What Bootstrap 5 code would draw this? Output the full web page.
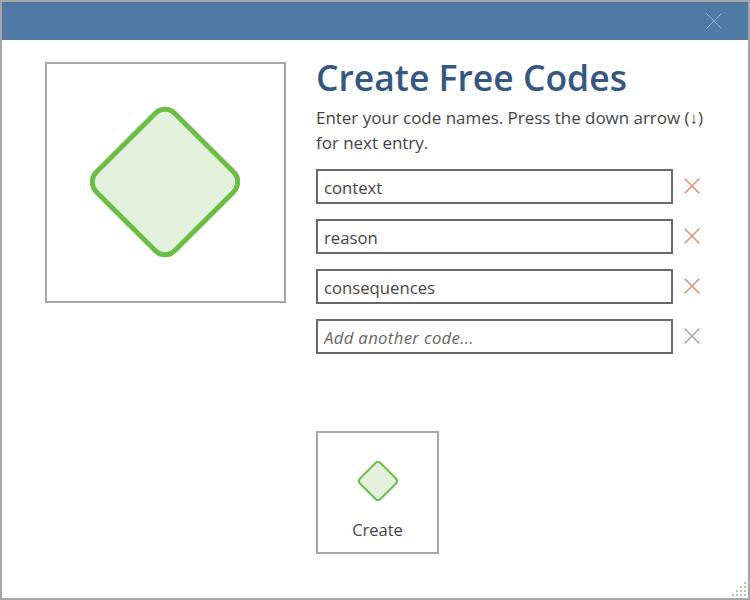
<!DOCTYPE html>
<html lang="en">
<head>
    <meta charset="UTF-8">
    <meta name="viewport" content="width=device-width, initial-scale=1.0">
    <title>Create Free Codes</title>
    <link href="https://cdn.jsdelivr.net/npm/bootstrap@5.3.0/dist/css/bootstrap.min.css" rel="stylesheet">
    <style>
        html, body {
            height: 100%;
            overflow: hidden;
        }
        body {
            font-family: "Open Sans", "Noto Sans", sans-serif;
            color: #444;
            background-color: #fff;
        }
        .app-window {
            position: relative;
            height: 600px;
            border: 2px solid #a6a6a6;
        }
        .title-strip {
            height: 38px;
            background-color: #5079a3;
            padding-right: 26px;
        }
        .dialog-body {
            padding: 22px 0 0 43px;
        }
        .preview-box {
            width: 241px;
            height: 241px;
            border: 2px solid #a6a6a6;
            margin-right: 30px;
            padding: 0 1px 1px 0;
        }
        .form-side {
            width: 388px;
        }
        .dialog-title {
            font-family: "Open Sans", sans-serif;
            font-size: 35.5px;
            line-height: 36px;
            font-weight: 600;
            color: #34587f;
            margin: -3px 0 10px 0;
        }
        .dialog-hint {
            font-size: 17px;
            line-height: 25px;
            margin: 0 0 14px 0;
            letter-spacing: -0.03px;
        }
        .code-row {
            height: 35px;
            margin-bottom: 15px;
        }
        .code-input.form-control {
            width: 357px;
            height: 35px;
            padding: 2px 6px 0;
            border: 2px solid #696969;
            border-radius: 0;
            font-size: 16.7px;
            color: #444;
            box-shadow: none;
        }
        .code-input::placeholder {
            font-style: italic;
            color: #666;
            letter-spacing: 0.35px;
        }
        .remove-btn {
            width: 18px;
            height: 18px;
            margin: 0 0 1px 10px;
            border: 0;
            background: none;
            padding: 0;
            line-height: 0;
        }
        .create-tile {
            display: flex;
            flex-direction: column;
            align-items: center;
            width: 123px;
            height: 123px;
            margin-top: 77px;
            padding: 27px 0 0;
            border: 2px solid #a6a6a6;
            border-radius: 0;
            background-color: #fff;
            color: #444;
            font-size: 16.5px;
            line-height: 20px;
        }
        .create-tile svg {
            margin-bottom: 18px;
        }
        .resize-grip {
            position: absolute;
            right: 1px;
            bottom: 1px;
        }
    </style>
</head>
<body>
    <div class="app-window">
        <div class="title-strip d-flex align-items-center justify-content-end">
            <svg width="16" height="16" viewBox="0 0 16 16"><path d="M.5.5 15.500 15.500M15.500.5 .5 15.500" stroke="#8db6dc" stroke-width="1" fill="none"/></svg>
        </div>

        <div class="dialog-body d-flex align-items-start">
            <div class="preview-box d-flex align-items-center justify-content-center">
                <svg width="160" height="160" viewBox="0 0 160 160">
                    <rect x="24.500" y="24.500" width="111" height="111" rx="14" transform="rotate(45 80 80)" fill="#e2f0dc" stroke="#6abd45" stroke-width="5"/>
                </svg>
            </div>

            <div class="form-side">
                <h1 class="dialog-title">Create Free Codes</h1>
                <p class="dialog-hint">Enter your code names. Press the down arrow (↓) for next entry.</p>

                <div class="code-row d-flex align-items-center">
                    <input class="code-input form-control" type="text" value="context">
                    <button class="remove-btn" type="button"><svg width="18" height="18" viewBox="0 0 18 18"><path d="M1.500 1.500 16.500 16.500M16.500 1.500 1.500 16.500" stroke="#dd9077" stroke-width="1.500" fill="none"/></svg></button>
                </div>
                <div class="code-row d-flex align-items-center">
                    <input class="code-input form-control" type="text" value="reason">
                    <button class="remove-btn" type="button"><svg width="18" height="18" viewBox="0 0 18 18"><path d="M1.500 1.500 16.500 16.500M16.500 1.500 1.500 16.500" stroke="#dd9077" stroke-width="1.500" fill="none"/></svg></button>
                </div>
                <div class="code-row d-flex align-items-center">
                    <input class="code-input form-control" type="text" value="consequences">
                    <button class="remove-btn" type="button"><svg width="18" height="18" viewBox="0 0 18 18"><path d="M1.500 1.500 16.500 16.500M16.500 1.500 1.500 16.500" stroke="#dd9077" stroke-width="1.500" fill="none"/></svg></button>
                </div>
                <div class="code-row d-flex align-items-center">
                    <input class="code-input form-control" type="text" placeholder="Add another code...">
                    <button class="remove-btn" type="button"><svg width="18" height="18" viewBox="0 0 18 18"><path d="M1.500 1.500 16.500 16.500M16.500 1.500 1.500 16.500" stroke="#a6a6a6" stroke-width="1.500" fill="none"/></svg></button>
                </div>

                <button class="create-tile" type="button">
                    <svg width="42" height="42" viewBox="0 0 42 42">
                        <rect x="6.500" y="6.500" width="29" height="29" rx="3.500" transform="rotate(45 21 21)" fill="#e2f0dc" stroke="#6abd45" stroke-width="2"/>
                    </svg>
                    Create
                </button>
            </div>
        </div>

        <svg class="resize-grip" width="16" height="16" viewBox="0 0 16 16" fill="#b5c4b0">
            <rect x="13" y="1" width="2" height="2"/>
            <rect x="9" y="5" width="2" height="2"/><rect x="13" y="5" width="2" height="2"/>
            <rect x="5" y="9" width="2" height="2"/><rect x="9" y="9" width="2" height="2"/><rect x="13" y="9" width="2" height="2"/>
            <rect x="1" y="13" width="2" height="2"/><rect x="5" y="13" width="2" height="2"/><rect x="9" y="13" width="2" height="2"/><rect x="13" y="13" width="2" height="2"/>
        </svg>
    </div>

    <script src="https://cdn.jsdelivr.net/npm/bootstrap@5.3.0/dist/js/bootstrap.bundle.min.js"></script>
</body>
</html>
